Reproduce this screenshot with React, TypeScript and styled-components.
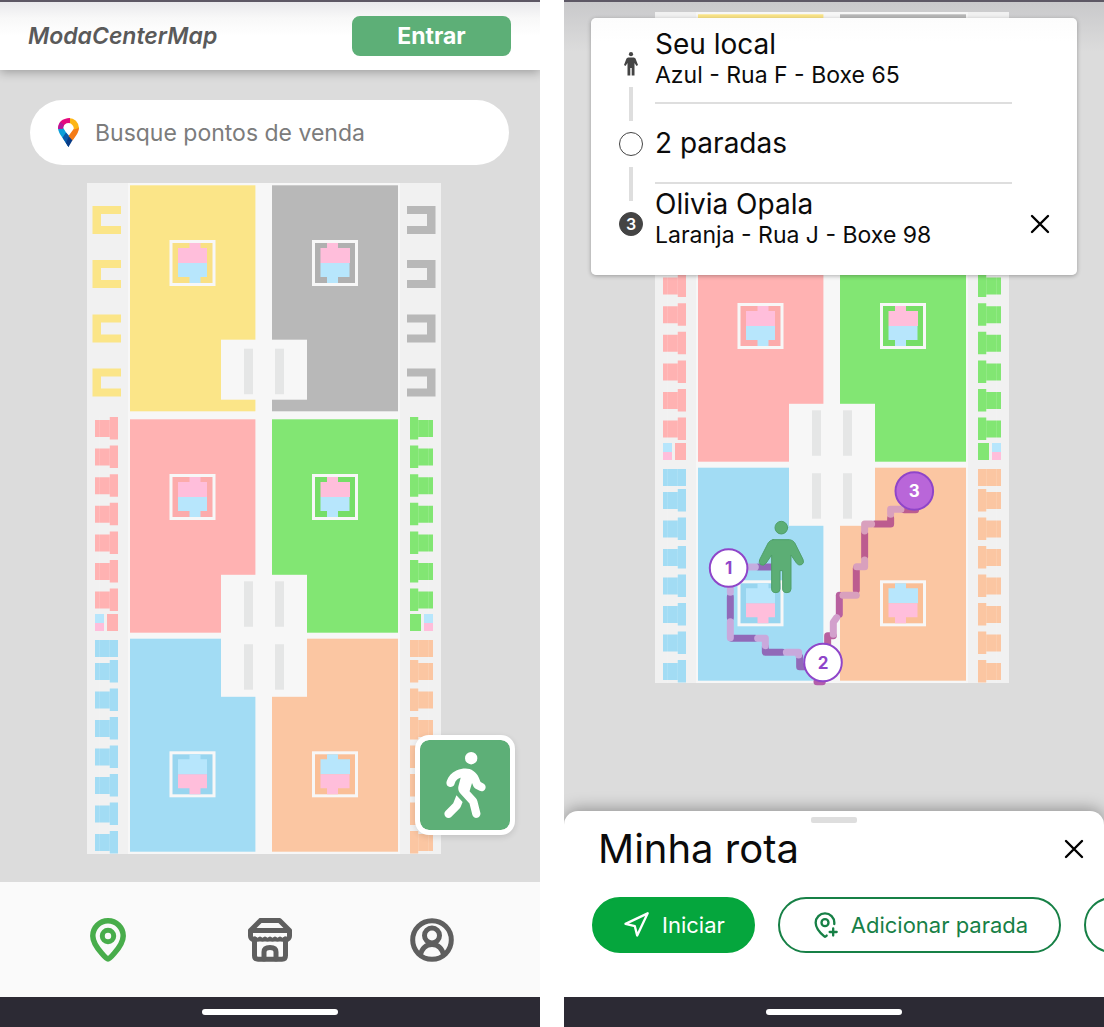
import React from "react";
import styled, { createGlobalStyle, css } from "styled-components";
import { FaPersonWalking } from "react-icons/fa6";
import { MapPinPlus, Navigation } from "lucide-react";

const GlobalStyle = createGlobalStyle`
  *, *::before, *::after { box-sizing: border-box; }
  body {
    margin: 0;
    background: #fff;
    color: #0b0b0b;
    font-family: Inter, "Liberation Sans", sans-serif;
  }
  button, input { font: inherit; }
  h1, h2, p, ul, ol { margin: 0; padding: 0; }
`;

const Screens = styled.main`
  display: grid;
  grid-template-columns: minmax(0, 1fr) minmax(0, 1fr);
  gap: 24px;
  min-height: 100vh;
`;

const Phone = styled.section`
  display: flex;
  flex-direction: column;
  overflow: hidden;
  border-top: 2px solid #5d5865;
  background: #dcdcdc;
`;

const Header = styled.header`
  position: relative;
  z-index: 1;
  display: flex;
  align-items: center;
  justify-content: space-between;
  height: 68px;
  padding: 0 29px 0 28px;
  background: linear-gradient(#e9e9ec, #f8f8f8 16px, #fff 34px);
  box-shadow: 0 2px 10px rgba(0, 0, 0, 0.3);
`;

const Brand = styled.h1`
  color: #5a5a5a;
  font-size: 23px;
  font-style: italic;
  font-weight: 600;
  line-height: 32px;
`;

const LoginButton = styled.button`
  width: 159px;
  height: 40px;
  border: 0;
  border-radius: 8px;
  background: #5daf77;
  color: #fff;
  font-size: 23px;
  font-weight: 700;
`;

const Canvas = styled.div<{ $shaded?: boolean }>`
  position: relative;
  display: flex;
  flex: 1;
  flex-direction: column;
  ${(p) =>
    p.$shaded &&
    css`
      background: linear-gradient(#c9c9cb, #dcdcdc 50px);
    `}
`;

const SearchBox = styled.label`
  display: flex;
  align-items: center;
  gap: 16px;
  height: 65px;
  margin: 30px 31px 18px 30px;
  padding: 0 28px;
  border-radius: 33px;
  background: #fff;
`;

const SearchInput = styled.input`
  flex: 1;
  min-width: 0;
  padding: 0;
  border: 0;
  outline: 0;
  background: none;
  font-size: 23px;
  &::placeholder {
    color: #7c7c7c;
    opacity: 1;
  }
`;

const MapSlot = styled.div<{ $top?: number; $side: number }>`
  display: flex;
  justify-content: center;
  padding: ${(p) => p.$top ?? 0}px ${(p) => p.$side}px 28px 0;
  svg {
    display: block;
    flex: none;
    overflow: visible;
  }
`;

const WalkButton = styled.button`
  position: absolute;
  right: 25px;
  bottom: 47px;
  display: grid;
  place-items: center;
  width: 100px;
  height: 100px;
  padding: 0;
  border: 5px solid #fff;
  border-radius: 14px;
  background: #5daf77;
  background-clip: padding-box;
  color: #fff;
  font-size: 66px;
  box-shadow: 0 2px 6px rgba(0, 0, 0, 0.12);
`;

const TabBar = styled.nav`
  display: grid;
  grid-template-columns: repeat(3, 1fr);
  height: 115px;
  padding: 0 27px;
  background: #fafafa;
`;

const Tab = styled.button<{ $active?: boolean }>`
  display: grid;
  place-items: center;
  padding: 0;
  border: 0;
  background: none;
  color: ${(p) => (p.$active ? "#48ad4b" : "#5f5f5f")};
`;

const GestureBar = styled.footer`
  position: relative;
  display: grid;
  place-items: center;
  height: 30px;
  background: #2c2a34;
  &::after {
    content: "";
    width: 136px;
    height: 6px;
    border-radius: 3px;
    background: #fff;
  }
`;

const RouteCard = styled.div`
  position: absolute;
  top: 16px;
  right: 27px;
  left: 27px;
  display: grid;
  grid-template-columns: 1fr 20px;
  column-gap: 18px;
  padding: 6px 27px 11px;
  border-radius: 5px;
  background: linear-gradient(#fcfcfc, #fff 24px);
  box-shadow: 0 1px 4px rgba(0, 0, 0, 0.3);
`;

const Stops = styled.ol`
  list-style: none;
`;

const Stop = styled.li`
  position: relative;
  display: grid;
  grid-template-columns: 26px 1fr;
  column-gap: 11px;
  height: 80px;
  & + &::before {
    content: "";
    position: absolute;
    top: -17px;
    left: 11px;
    width: 4px;
    height: 34px;
    background: #dedede;
  }
`;

const StopMark = styled.span`
  display: grid;
  place-items: center;
`;

const Dot = styled.span<{ $filled?: boolean }>`
  display: grid;
  place-items: center;
  width: 24px;
  height: 24px;
  border: 1px solid #444;
  border-radius: 50%;
  background: ${(p) => (p.$filled ? "#444" : "#fff")};
  color: #fff;
  font-size: 16px;
  font-weight: 600;
  line-height: 20px;
`;

const StopText = styled.div<{ $line?: boolean }>`
  display: flex;
  flex-direction: column;
  justify-content: center;
  border-bottom: 2px solid ${(p) => (p.$line ? "#dedede" : "transparent")};
`;

const StopName = styled.p`
  font-size: 28px;
  line-height: 32px;
`;

const StopPlace = styled.p`
  padding-bottom: 8px;
  font-size: 23px;
  line-height: 30px;
`;

const CloseButton = styled.button<{ $tall?: boolean }>`
  align-self: ${(p) => (p.$tall ? "end" : "center")};
  display: grid;
  place-items: center;
  width: 20px;
  height: ${(p) => (p.$tall ? 80 : 40)}px;
  padding: 0;
  border: 0;
  background: none;
  color: #000;
`;

const Sheet = styled.section`
  position: relative;
  height: 186px;
  padding-top: 6px;
  border-radius: 14px 14px 0 0;
  background: #fff;
  box-shadow: 0 -2px 16px rgba(0, 0, 0, 0.35);
`;

const Handle = styled.div`
  width: 46px;
  height: 6px;
  margin: 0 auto;
  border-radius: 2px;
  background: #dedede;
`;

const SheetHead = styled.div`
  display: flex;
  align-items: center;
  justify-content: space-between;
  height: 52px;
  padding: 0 20px 0 34px;
`;

const SheetTitle = styled.h2`
  font-size: 40px;
  font-weight: 400;
  line-height: 52px;
`;

const Actions = styled.div`
  display: flex;
  gap: 23px;
  margin-top: 22px;
  padding-left: 28px;
  overflow: hidden;
`;

const Action = styled.button<{ $primary?: boolean }>`
  display: flex;
  flex: none;
  align-items: center;
  gap: 12px;
  min-width: 160px;
  height: 56px;
  padding: 0 ${(p) => (p.$primary ? 28 : 31)}px;
  border: 2px solid ${(p) => (p.$primary ? "#05a63d" : "#178046")};
  border-radius: 28px;
  background: ${(p) => (p.$primary ? "#05a63d" : "#fff")};
  color: ${(p) => (p.$primary ? "#fff" : "#178046")};
  font-size: 22px;
  white-space: nowrap;
`;

const C = {
  yellow: "#fbe588",
  gray: "#b8b8b8",
  red: "#ffb2b2",
  green: "#82e673",
  blue: "#a2dcf4",
  orange: "#fbc6a2",
  pink: "#ffbedb",
  sky: "#b7e6fc",
};

const Kiosk = ({ x, y, mirror, flip, corner }: { x: number; y: number; mirror?: boolean; flip?: boolean; corner: string }) => {
  const nub = mirror ? 15 : 20;
  const [top, bottom] = flip ? [C.sky, C.pink] : [C.pink, C.sky];
  return (
    <g transform={`translate(${x} ${y})`}>
      <rect x="1.5" y="1.5" width="43" height="43" fill={corner} stroke="#f7f7f7" strokeWidth="3" />
      <path fill={top} d={`M${nub} 3h11v5H${mirror ? 38 : 37.5}V23H8.5V8H${nub}z`} />
      <path fill={bottom} d={`M8.5 23h29v14H${nub + 11}v6H${nub}v-6H8.5z`} />
    </g>
  );
};

const Plaza = ({ y, h, bars }: { y: number; h: number; bars: number[] }) => (
  <g>
    <rect x="134" y={y} width="86" height={h} fill="#f7f7f7" />
    {bars.map((b) => (
      <g key={b} fill="#e5e6e6">
        <rect x="157" y={b} width="9" height="45.5" />
        <rect x="188" y={b} width="9" height="45.5" />
      </g>
    ))}
  </g>
);

/* Stalls along the outer walls; drawn for the left wall and mirrored for the right one. */
const SideStalls = ({ first, middle, last }: { first: string; middle: string; last: string }) => (
  <g>
    {[23, 77, 131.5, 185.5].map((y) => (
      <path key={y} fill={first} d={`M5.5 ${y}h28.5v8h-20v12h20v8H5.5z`} />
    ))}
    {[0, 1, 2, 3, 4, 5, 6].map((i) => (
      <React.Fragment key={i}>
        <path fill={middle} transform={`translate(8 ${234 + i * 28.6})`} d="M0 3h14.7V0H23v22.5h-8.3V20H0z" />
        <path fill={last} transform={`translate(8 ${477 + i * 28.5})`} d="M0 3h14.7V0H23v22.5h-8.3V20H0z" />
      </React.Fragment>
    ))}
    <path fill={C.sky} d="M8 431h9v9H8z" />
    <path fill={C.pink} d="M8 440h9v8H8z" />
    <path fill={middle} d="M20 431h11v17H20z" />
    <path fill={last} d="M8 457h23v17H8z" />
    <path d="M12.5 234v195M22.5 234v195M12.5 457v214M22.5 457v214" fill="none" stroke="#fff" strokeWidth="1" opacity=".12" />
  </g>
);

const MallMap = ({ children }: { children?: React.ReactNode }) => (
  <svg width="354" height="671" viewBox="0 0 354 671" role="img" aria-label="Mapa">
    <rect width="354" height="671" fill="#f1f1f1" />
    <rect x="41" width="272" height="671" fill="#f7f7f7" />
    <rect x="43" y="2.3" width="125.4" height="226" fill={C.yellow} />
    <rect x="185" y="2.3" width="126" height="226" fill={C.gray} />
    <rect x="43" y="236.3" width="125.4" height="213.4" fill={C.red} />
    <rect x="185" y="236.3" width="126" height="213.4" fill={C.green} />
    <rect x="43" y="455.7" width="125.4" height="213" fill={C.blue} />
    <rect x="185" y="455.7" width="126" height="213" fill={C.orange} />
    <Plaza y={156.7} h={60} bars={[165.7]} />
    <Plaza y={391.8} h={122} bars={[398.3, 461.2]} />
    <Kiosk x={82.5} y={57} corner="#f9e084" />
    <Kiosk x={225} y={57} corner="#b0b0b0" mirror />
    <Kiosk x={82.5} y={291} corner="#fcabab" />
    <Kiosk x={225} y={291} corner="#76de67" mirror />
    <Kiosk x={82.5} y={568.3} corner="#98d5ef" flip />
    <Kiosk x={225} y={568.3} corner="#fabf97" mirror flip />
    <SideStalls first={C.yellow} middle={C.red} last={C.blue} />
    <g transform="translate(354 0) scale(-1 1)">
      <SideStalls first={C.gray} middle={C.green} last={C.orange} />
    </g>
    {children}
  </svg>
);

const legs: [string, string][] = [
  ["#9169b8", "M385 336H340"],
  ["#c5addf", "M331 336H300"],
  ["#9169b8", "M256 425V488"],
  ["#c5addf", "M256 395V412"],
  ["#9169b8", "M260 550H330"],
  ["#c9a9dc", "M256 500V548"],
  ["#9169b8", "M361 575V592H412"],
  ["#c9a9dc", "M338 550H361V572"],
  ["#9169b8", "M464 605V635H485"],
  ["#c9a9dc", "M424 592H461V600"],
  ["#b35eab", "M516 680H532"],
  ["#b8609f", "M548 570V542H565"],
  ["#b8609f", "M583 478V421"],
  ["#d2a0cc", "M565 538V502L575 488"],
  ["#bc5c8f", "M634 405V340"],
  ["#d9a0bd", "M594 421H634"],
  ["#bc5c8f", "M659 305V235"],
  ["#d9a0bd", "M635 335H659V315"],
  ["#bc5c8f", "M690 207H737V190"],
  ["#d9a0bd", "M659 228V207H680"],
  ["#bc5c8f", "M778 164H812"],
  ["#d9a0bd", "M737 178V163H768"],
];

const pins = [
  { n: 1, x: 73.6, y: 556, fill: "#fff", ink: "#8f45c9" },
  { n: 2, x: 168, y: 650.5, fill: "#fff", ink: "#8f45c9" },
  { n: 3, x: 259.3, y: 479, fill: "#b966d9", ink: "#fff" },
];

const Route = () => (
  <g>
    <g transform="translate(-10 443) scale(.3333)" fill="none" strokeWidth="21" strokeLinecap="round" strokeLinejoin="round">
      {legs.map(([color, d]) => (
        <path key={d} d={d} stroke={color} />
      ))}
      <g fill="#5cae75" stroke="#4f9f69" strokeWidth="3">
        <circle cx="409" cy="218" r="19" />
        <path d="M384 254H434Q443 255 449 263L474 313Q479 324 470 329Q461 333 455 325L438 300V402Q438 413 426 413Q413 413 413 402V347H405V402Q405 413 393 413Q380 413 380 402V300L363 325Q356 334 347 329Q340 323 344 314L370 263Q376 255 384 254Z" />
      </g>
    </g>
    {pins.map((p) => (
      <g key={p.n}>
        <circle cx={p.x} cy={p.y} r="18.8" fill={p.fill} stroke="#8f45c9" strokeWidth="2" />
        <text x={p.x} y={p.y + 6} textAnchor="middle" fill={p.ink} fontSize="17" fontWeight="700">
          {p.n}
        </text>
      </g>
    ))}
  </g>
);

const BrandPin = () => (
  <svg width="21" height="29" viewBox="0 0 21 29" aria-hidden="true">
    <path fill="#0c9fd9" d="M0 10L5 9.5 10.5 18.5V29L5 20.5Q0 14 0 10Z" />
    <path fill="#0a5aa8" d="M4.5 19.8L8 14.5 12.8 19.5 10.5 29Z" />
    <path fill="#093b86" d="M8 25L11.5 17 15.5 20.5 10.5 29Z" />
    <path fill="#f47b16" d="M21 10Q21 14 16 20.5L14.5 22.5 10.5 18 16 10.5 18 6Z" />
    <path fill="#fdb515" d="M10.5 0Q20 .5 21 10L16 11.5Q15.5 5.5 10.5 5Z" />
    <path fill="#e5087e" d="M12 0V5Q5.5 4.5 5 10.5L0 11Q0 .5 12 0Z" />
    <path fill="#b5179a" d="M0 11Q0 7 2.5 4L6 7Q5 9 5 10.5Z" />
  </svg>
);

const PinIcon = () => (
  <svg width="36" height="44" viewBox="0 0 36 44" fill="none" stroke="currentColor" strokeWidth="5" strokeLinejoin="round" aria-hidden="true">
    <path strokeWidth="5.5" d="M18 41Q16.500 41 11.500 35Q2.800 25 2.800 18A15.200 15.200 0 0 1 33.200 18Q33.200 25 24.500 35Q19.500 41 18 41Z" />
    <circle cx="18" cy="18" r="5.7" />
  </svg>
);

const StoreIcon = () => (
  <svg width="44" height="44" viewBox="0 0 44 44" fill="none" stroke="currentColor" strokeWidth="5" strokeLinejoin="round" strokeLinecap="round" aria-hidden="true">
    <path d="M12.5 2.5H31.5L41.5 12.5V18Q41.5 21 37.5 22M12.5 2.5L2.5 12.5V18Q2.5 21 6.5 22M2.5 12.5H41.5" />
    <path strokeWidth="4" d="M7 20.5q2.5 2.500 5 0 2.500 2.500 5 0 2.500 2.500 5 0 2.500 2.500 5 0 2.500 2.500 5 0 2.500 2.500 5 0" />
    <path d="M6.5 21V37.5Q6.5 41.200 10 41.200H34Q37.5 41.200 37.5 37.5V21" />
    <path d="M16 41V34Q16 29.5 22 29.5T28 34V41" />
  </svg>
);

const UserIcon = () => (
  <svg width="44" height="44" viewBox="0 0 44 44" fill="none" stroke="currentColor" strokeWidth="5" aria-hidden="true">
    <circle cx="22" cy="22" r="19.3" />
    <circle cx="22" cy="17.5" r="7.5" />
    <path d="M10 37.5Q13 26.5 22 26.5T34 37.5" />
  </svg>
);

const StandingIcon = () => (
  <svg width="14" height="24" viewBox="0 0 14 24" fill="#444" aria-hidden="true">
    <circle cx="7" cy="2.2" r="2.1" />
    <path d="M4 5.5H10L11.500 6.500 14 13 12.500 14 10.500 11V23.5H7.700V16H6.300V23.5H3.500V11L1.500 14 0 13 2.500 6.500Z" />
  </svg>
);

const CrossIcon = () => (
  <svg width="20" height="20" viewBox="0 0 20 20" fill="none" stroke="currentColor" strokeWidth="2.4" strokeLinecap="round" aria-hidden="true">
    <path d="M2 2L18 18M18 2L2 18" />
  </svg>
);

export default function App() {
  return (
    <>
      <GlobalStyle />
      <Screens>
        <Phone>
          <Header>
            <Brand>ModaCenterMap</Brand>
            <LoginButton type="button">Entrar</LoginButton>
          </Header>
          <Canvas>
            <SearchBox>
              <BrandPin />
              <SearchInput type="text" aria-label="Busque pontos de venda" placeholder="Busque pontos de venda" />
            </SearchBox>
            <MapSlot $side={12}>
              <MallMap />
            </MapSlot>
            <WalkButton type="button" aria-label="Rota a pé">
              <FaPersonWalking />
            </WalkButton>
          </Canvas>
          <TabBar>
            <Tab type="button" $active aria-label="Mapa">
              <PinIcon />
            </Tab>
            <Tab type="button" aria-label="Lojas">
              <StoreIcon />
            </Tab>
            <Tab type="button" aria-label="Perfil">
              <UserIcon />
            </Tab>
          </TabBar>
          <GestureBar />
        </Phone>

        <Phone>
          <Canvas $shaded>
            <MapSlot $top={10} $side={4}>
              <MallMap>
                <Route />
              </MallMap>
            </MapSlot>
            <RouteCard>
              <Stops>
                <Stop>
                  <StopMark>
                    <StandingIcon />
                  </StopMark>
                  <StopText $line>
                    <StopName>Seu local</StopName>
                    <StopPlace>Azul - Rua F - Boxe 65</StopPlace>
                  </StopText>
                </Stop>
                <Stop>
                  <StopMark>
                    <Dot />
                  </StopMark>
                  <StopText $line>
                    <StopName>2 paradas</StopName>
                  </StopText>
                </Stop>
                <Stop>
                  <StopMark>
                    <Dot $filled>3</Dot>
                  </StopMark>
                  <StopText>
                    <StopName>Olivia Opala</StopName>
                    <StopPlace>Laranja - Rua J - Boxe 98</StopPlace>
                  </StopText>
                </Stop>
              </Stops>
              <CloseButton type="button" $tall aria-label="Fechar">
                <CrossIcon />
              </CloseButton>
            </RouteCard>
          </Canvas>
          <Sheet>
            <Handle />
            <SheetHead>
              <SheetTitle>Minha rota</SheetTitle>
              <CloseButton type="button" aria-label="Fechar rota">
                <CrossIcon />
              </CloseButton>
            </SheetHead>
            <Actions>
              <Action type="button" $primary>
                <Navigation size={28} aria-hidden="true" />
                Iniciar
              </Action>
              <Action type="button">
                <MapPinPlus size={28} aria-hidden="true" />
                Adicionar parada
              </Action>
              <Action type="button" aria-label="Mais opções" />
            </Actions>
          </Sheet>
          <GestureBar />
        </Phone>
      </Screens>
    </>
  );
}
